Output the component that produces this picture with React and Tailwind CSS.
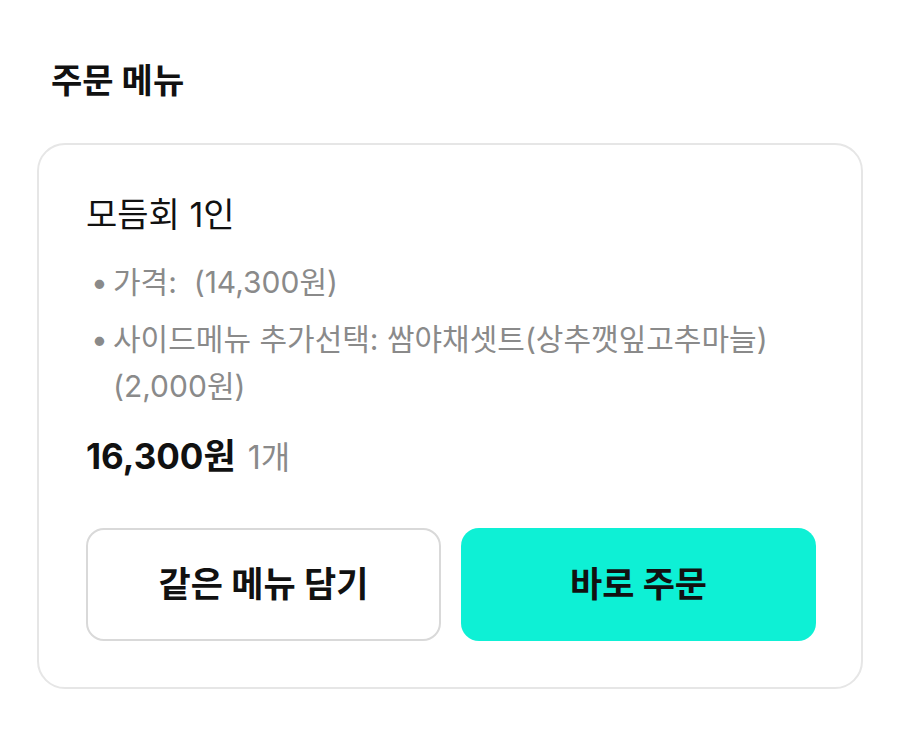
export default function App() {
  const font = { fontFamily: 'Inter, "Noto Sans CJK KR", "Noto Sans", sans-serif' };
  return (
    <div className="min-h-[730px] w-[900px] bg-white pt-[59px] pl-[37px] pr-[37px]" style={font}>
      <h2 className="pl-[14px] text-[34px] font-bold leading-[44px] text-[#111]">주문 메뉴</h2>
      <div className="mt-[40px] rounded-[28px] border-2 border-[#e6e6e6] pl-[47px] pr-[45px] pt-[48px] pb-[46px]">
        <div className="text-[34px] leading-[44px] text-[#111]">모듬회 1인</div>
        <ul className="mt-[22px] flex flex-col gap-[10px] text-[30px] leading-[47px] text-[#8a8a8a]">
          <li className="flex">
            <span className="w-[27px] shrink-0 pl-[5px]">•</span>
            <span>가격:&nbsp; (14,300원)</span>
          </li>
          <li className="flex">
            <span className="w-[27px] shrink-0 pl-[5px]">•</span>
            <span>사이드메뉴 추가선택: 쌈야채셋트(상추깻잎고추마늘)<br />(2,000원)</span>
          </li>
        </ul>
        <div className="mt-[24px] flex items-baseline gap-[12px] leading-[44px]">
          <span className="text-[35px] font-bold text-[#111]">16,300원</span>
          <span className="text-[32px] text-[#8a8a8a]">1개</span>
        </div>
        <div className="mt-[48px] grid grid-cols-2 gap-[20px]">
          <button className="h-[113px] rounded-[18px] border-2 border-[#d9d9d9] bg-white text-[35px] font-bold text-[#111]">같은 메뉴 담기</button>
          <button className="h-[113px] rounded-[18px] bg-[#0ef0d5] text-[35px] font-bold text-[#111]">바로 주문</button>
        </div>
      </div>
    </div>
  );
}
